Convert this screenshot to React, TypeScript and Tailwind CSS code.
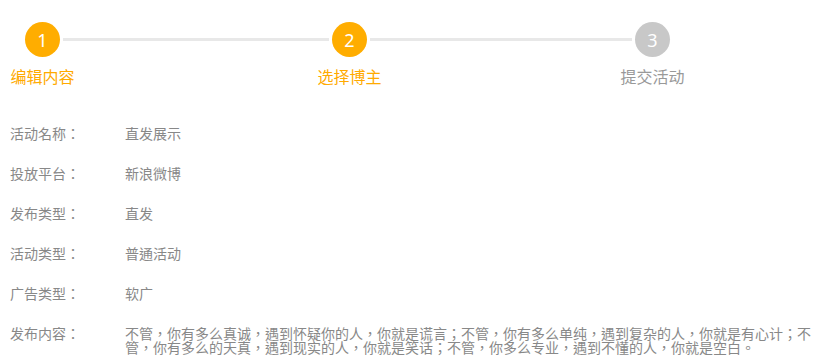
import React from "react";

const font = { fontFamily: '"Noto Sans CJK SC", "Noto Sans", sans-serif' };
const rowFont = { fontFamily: '"Noto Sans CJK TC", "Noto Sans CJK SC", sans-serif' };

function Step({ n, label, active }: { n: number; label: string; active: boolean }) {
  return (
    <div className="flex w-[35px] flex-col items-center">
      <div
        className={`flex h-[35px] w-[35px] items-center justify-center rounded-full text-[18px] leading-none text-white ${
          active ? "bg-[#ffad00]" : "bg-[#c8c8c8]"
        }`}
        style={{ fontFamily: '"Noto Sans", sans-serif' }}
      >
        {n}
      </div>
      <div
        className={`mt-[9px] whitespace-nowrap text-[16px] leading-[20px] ${
          active ? "text-[#ffaa00]" : "text-[#999999]"
        }`}
      >
        {label}
      </div>
    </div>
  );
}

const rows: [string, string][] = [
  ["活动名称：", "直发展示"],
  ["投放平台：", "新浪微博"],
  ["发布类型：", "直发"],
  ["活动类型：", "普通活动"],
  ["广告类型：", "软广"],
  [
    "发布内容：",
    "不管，你有多么真诚，遇到怀疑你的人，你就是谎言；不管，你有多么单纯，遇到复杂的人，你就是有心计；不管，你有多么的天真，遇到现实的人，你就是笑话；不管，你多么专业，遇到不懂的人，你就是空白。",
  ],
];

export default function App() {
  return (
    <div className="h-[360px] w-full overflow-hidden bg-white pl-[10px] pr-[9px]" style={font}>
      <div className="flex items-start pl-[15px] pt-[22px]">
        <Step n={1} label="编辑内容" active />
        <div className="mx-[3px] mt-[16px] h-[3px] w-[266px] bg-[#e8e8e8]" />
        <Step n={2} label="选择博主" active />
        <div className="mx-[3px] mt-[16px] h-[3px] w-[262px] bg-[#e8e8e8]" />
        <Step n={3} label="提交活动" active={false} />
      </div>
      <div className="mt-[40px] flex flex-col gap-[26px]" style={rowFont}>
        {rows.map(([k, v]) => (
          <div key={k} className="flex text-[14px] leading-[14px] text-[#888888]">
            <div className="w-[115px] shrink-0">{k}</div>
            <div className="min-w-0 flex-1">{v}</div>
          </div>
        ))}
      </div>
    </div>
  );
}
